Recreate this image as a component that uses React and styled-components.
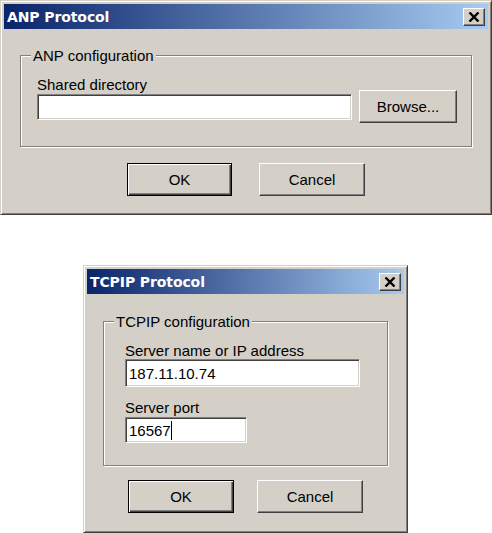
import React from "react";
import styled, { createGlobalStyle } from "styled-components";

const Global = createGlobalStyle`
  html, body { margin: 0; padding: 0; background: #ffffff; }
  body { font-family: "Liberation Sans", Arial, sans-serif; }
`;

const Page = styled.div`
  display: flex;
  flex-direction: column;
  align-items: flex-start;
  gap: 50px;
`;

const Window = styled.div`
  box-sizing: border-box;
  width: ${(p) => p.$w}px;
  height: ${(p) => p.$h}px;
  margin-left: ${(p) => p.$left || 0}px;
  background: #d4d0c8;
  border: 1px solid;
  border-color: #d4d0c8 #404040 #404040 #d4d0c8;
  box-shadow: inset 1px 1px 0 #ffffff, inset -1px -1px 0 #808080;
  padding: 3px;
  display: flex;
  flex-direction: column;
`;

const TitleBar = styled.div`
  height: 25px;
  flex: none;
  background: linear-gradient(to right, #0a246a, #a6caf0);
  display: flex;
  align-items: center;
  justify-content: space-between;
  padding: 0 3px 0 3px;
`;

const Title = styled.span`
  color: #ffffff;
  font-family: "DejaVu Sans", Verdana, sans-serif;
  font-weight: bold;
  font-size: 14px;
  letter-spacing: -0.1px;
`;

const CloseButton = styled.div`
  box-sizing: border-box;
  width: 22px;
  height: 18px;
  background: #d4d0c8;
  border: 1px solid;
  border-color: #ffffff #404040 #404040 #ffffff;
  box-shadow: inset -1px -1px 0 #808080;
  display: flex;
  align-items: center;
  justify-content: center;
`;

const Body = styled.div`
  flex: 1;
  display: flex;
  flex-direction: column;
  padding: ${(p) => p.$top}px 16px 0 16px;
`;

const Group = styled.fieldset`
  margin: 0;
  padding: 0;
  min-width: 0;
  border: 1px solid #808080;
  box-shadow: inset 1px 1px 0 #ffffff, 1px 1px 0 #ffffff;
`;

const Legend = styled.legend`
  margin-left: 10px;
  padding: 0 2px;
  background: #d4d0c8;
  font-size: 15px;
  line-height: 17px;
  color: #000;
`;

const GroupContent = styled.div`
  display: flex;
  flex-direction: column;
  padding: 12px ${(p) => p.$right}px ${(p) => p.$bottom}px ${(p) => p.$left}px;
`;

const FieldRow = styled.div`
  display: flex;
  align-items: flex-end;
  gap: 7px;
`;

const Field = styled.div`
  display: flex;
  flex-direction: column;
  flex: ${(p) => (p.$grow ? 1 : "none")};
  margin-top: ${(p) => p.$mt || 0}px;
`;

const Label = styled.div`
  font-size: 15px;
  line-height: 17px;
  color: #000;
  margin-bottom: ${(p) => p.$mb ?? 0}px;
`;

const Input = styled.div`
  box-sizing: border-box;
  height: ${(p) => p.$h || 26}px;
  width: ${(p) => (p.$w ? `${p.$w}px` : "auto")};
  background: #ffffff;
  border: 1px solid;
  border-color: #808080 #ffffff #ffffff #808080;
  box-shadow: inset 1px 1px 0 #404040, inset -1px -1px 0 #d4d0c8;
  display: flex;
  align-items: center;
  padding-left: 3px;
  font-size: 15px;
  color: #000;
`;

const Caret = styled.span`
  display: inline-block;
  width: 1px;
  height: 19px;
  background: #000;
`;

const Button = styled.div`
  box-sizing: border-box;
  width: ${(p) => p.$w}px;
  height: 33px;
  flex: none;
  margin-bottom: ${(p) => p.$mb || 0}px;
  background: #d4d0c8;
  display: flex;
  align-items: center;
  justify-content: center;
  font-size: 15px;
  color: #000;
  border: 1px solid;
  border-color: ${(p) =>
    p.$default ? "#000000" : "#ffffff #404040 #404040 #ffffff"};
  box-shadow: ${(p) =>
    p.$default
      ? "inset 1px 1px 0 #ffffff, inset -1px -1px 0 #404040, inset -2px -2px 0 #808080"
      : "inset -1px -1px 0 #808080"};
`;

const ButtonRow = styled.div`
  display: flex;
  justify-content: center;
  gap: ${(p) => p.$gap}px;
  margin-top: ${(p) => p.$mt}px;
`;

const CloseIcon = () => (
  <svg width="12" height="10" viewBox="0 0 12 10">
    <path d="M1.5 0.5 L10.5 9.5 M10.5 0.5 L1.5 9.5" stroke="#000" strokeWidth="2.4" fill="none" />
  </svg>
);

const Dialog = ({ w, h, left, title, top, children }) => (
  <Window $w={w} $h={h} $left={left}>
    <TitleBar>
      <Title>{title}</Title>
      <CloseButton>
        <CloseIcon />
      </CloseButton>
    </TitleBar>
    <Body $top={top}>{children}</Body>
  </Window>
);

export default function App() {
  return (
    <>
      <Global />
      <Page>
        <Dialog w={492} h={215} title="ANP Protocol" top={18}>
          <Group>
            <Legend>ANP configuration</Legend>
            <GroupContent $left={16} $right={14} $bottom={26}>
              <FieldRow>
                <Field $grow>
                  <Label $mb={1}>Shared directory</Label>
                  <Input />
                </Field>
                <Button $w={98} $mb={-3}>Browse...</Button>
              </FieldRow>
            </GroupContent>
          </Group>
          <ButtonRow $gap={27} $mt={16}>
            <Button $w={105} $default>OK</Button>
            <Button $w={106}>Cancel</Button>
          </ButtonRow>
        </Dialog>

        <Dialog w={325} h={268} left={83} title="TCPIP Protocol" top={19}>
          <Group>
            <Legend>TCPIP configuration</Legend>
            <GroupContent $left={21} $right={14} $bottom={22}>
              <Field>
                <Label $mb={0}>Server name or IP address</Label>
                <Input $w={235} $h={28}>187.11.10.74</Input>
              </Field>
              <Field $mt={12}>
                <Label $mb={1}>Server port</Label>
                <Input $w={122}>
                  16567
                  <Caret />
                </Input>
              </Field>
            </GroupContent>
          </Group>
          <ButtonRow $gap={23} $mt={14}>
            <Button $w={106} $default>OK</Button>
            <Button $w={106}>Cancel</Button>
          </ButtonRow>
        </Dialog>
      </Page>
    </>
  );
}
